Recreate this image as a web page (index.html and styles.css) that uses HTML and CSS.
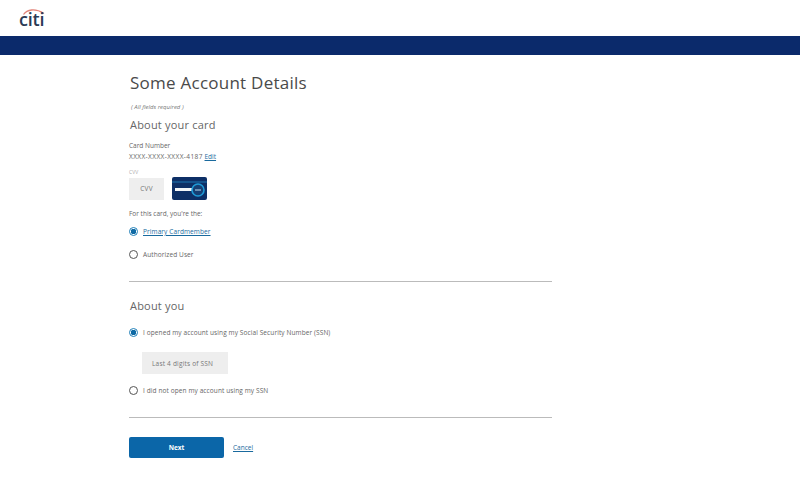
FILE: index.html
```html
<!DOCTYPE html>
<html lang="en">
<head>
<meta charset="utf-8">
<title>Some Account Details</title>
<link rel="stylesheet" href="styles.css">
</head>
<body>
<header class="top">
  <div class="logo"><svg class="arc" width="24" height="8" viewBox="0 0 24 8"><path d="M1.5 6.5C5 1.5 13 -0.2 22 5.5" fill="none" stroke="#e2847a" stroke-width="1.3"/></svg><span class="logo-text">citi</span></div>
</header>
<div class="band"></div>
<main class="content">
  <h1 class="title">Some Account Details</h1>
  <p class="req">( All fields required )</p>
  <h2 class="sub">About your card</h2>
  <div class="cardnum">
    <div>Card Number</div>
    <div><span class="masked">XXXX-XXXX-XXXX-4187</span> <a href="#" class="link">Edit</a></div>
  </div>
  <div class="tiny">CVV</div>
  <div class="cvv-row">
    <div class="field cvv">CVV</div>
    <svg class="cardicon" width="35" height="23" viewBox="0 0 35 23">
      <rect width="35" height="23" rx="2" fill="#0d2f66"/>
      <rect x="0" y="4" width="35" height="2" fill="#14528c"/>
      <rect x="3" y="11" width="22" height="3" fill="#f2f5f8"/>
      <circle cx="26" cy="13" r="6" fill="#163f74" stroke="#1f9ad6" stroke-width="1.6"/>
      <rect x="23" y="12.3" width="6" height="1.4" fill="#8fb3cf"/>
    </svg>
  </div>
  <p class="txt role">For this card, you're the:</p>
  <label class="radio first"><span class="dot on"></span><a href="#" class="link">Primary Cardmember</a></label>
  <label class="radio second"><span class="dot"></span><span>Authorized User</span></label>
  <hr class="rule r1">
  <h2 class="sub you">About you</h2>
  <label class="radio"><span class="dot on"></span><span>I opened my account using my Social Security Number (SSN)</span></label>
  <div class="field ssn">Last 4 digits of SSN</div>
  <label class="radio"><span class="dot"></span><span>I did not open my account using my SSN</span></label>
  <hr class="rule r2">
  <div class="actions">
    <button class="next" type="button">Next</button>
    <a href="#" class="link cancel">Cancel</a>
  </div>
</main>
</body>
</html>
```
FILE: styles.css
```css
* { box-sizing: border-box; }
html, body { margin: 0; padding: 0; }
body { width: 800px; height: 482px; overflow: hidden; background: #fff; color: #555; font-family: "Open Sans", "Liberation Sans", sans-serif; font-size: 7px; }
.top { height: 36px; padding: 8px 0 0 19px; }
.logo { position: relative; width: 26px; height: 18px; }
.arc { position: absolute; left: 3px; top: 0; }
.logo-text { position: absolute; left: 0; top: 1px; font-size: 18px; line-height: 20px; color: #2a3a55; font-weight: 600; letter-spacing: -0.2px; }
.band { height: 19px; background: #0b2a6b; }
.content { width: 423px; margin-left: 129px; padding-top: 16px; }
.title { margin: 0 0 0 1px; font-size: 17px; line-height: 24px; font-weight: 400; color: #4a4a4a; letter-spacing: 0.25px; }
.req { margin: 8px 0 0 2px; font-size: 6px; line-height: 9px; font-style: italic; color: #777; }
.sub { margin: 5px 0 0 1px; font-size: 11px; line-height: 16px; font-weight: 400; color: #666; letter-spacing: 0.2px; }
.cardnum { margin-top: 7px; line-height: 11px; font-size: 6.5px; color: #666; }
.masked { letter-spacing: 0.4px; }
.link { color: #1a6a9e; text-decoration: underline; }
.tiny { margin-top: 6px; font-size: 5px; line-height: 8px; color: #aaa; }
.cvv-row { display: flex; align-items: center; gap: 8px; margin-top: 1px; }
.field { display: flex; align-items: center; background: #eee; color: #777; font-size: 6.5px; letter-spacing: 0.2px; }
.cvv { width: 35px; height: 22px; justify-content: center; }
.txt { margin: 0; font-size: 6.5px; line-height: 10px; color: #666; }
.role { margin-top: 9px; }
.radio { display: flex; align-items: center; gap: 5px; height: 11px; font-size: 6.5px; color: #666; letter-spacing: 0.1px; }
.first { margin-top: 7px; }
.second { margin-top: 12px; }
.dot { width: 9px; height: 9px; border-radius: 50%; border: 1px solid #555; background: #fff; flex: none; }
.dot.on { border-color: #1f7fb8; background: radial-gradient(circle, #0f6aa5 0 2.6px, #fff 3px); }
.rule { margin: 0; border: 0; height: 1px; background: #bbb; }
.r1 { margin-top: 21px; }
.you { margin-top: 16px; }
.you + .radio { margin-top: 13px; }
.ssn { width: 86px; height: 22px; margin: 14px 0 0 13px; padding-left: 10px; }
.ssn + .radio { margin-top: 11px; }
.r2 { margin-top: 21px; }
.actions { display: flex; align-items: center; gap: 9px; margin-top: 19px; }
.next { width: 95px; height: 21px; padding: 0; border: 0; border-radius: 2px; background: #0b66a8; color: #fff; font: 700 6.5px "Open Sans", "Liberation Sans", sans-serif; }
.cancel { font-size: 6.5px; }
```
